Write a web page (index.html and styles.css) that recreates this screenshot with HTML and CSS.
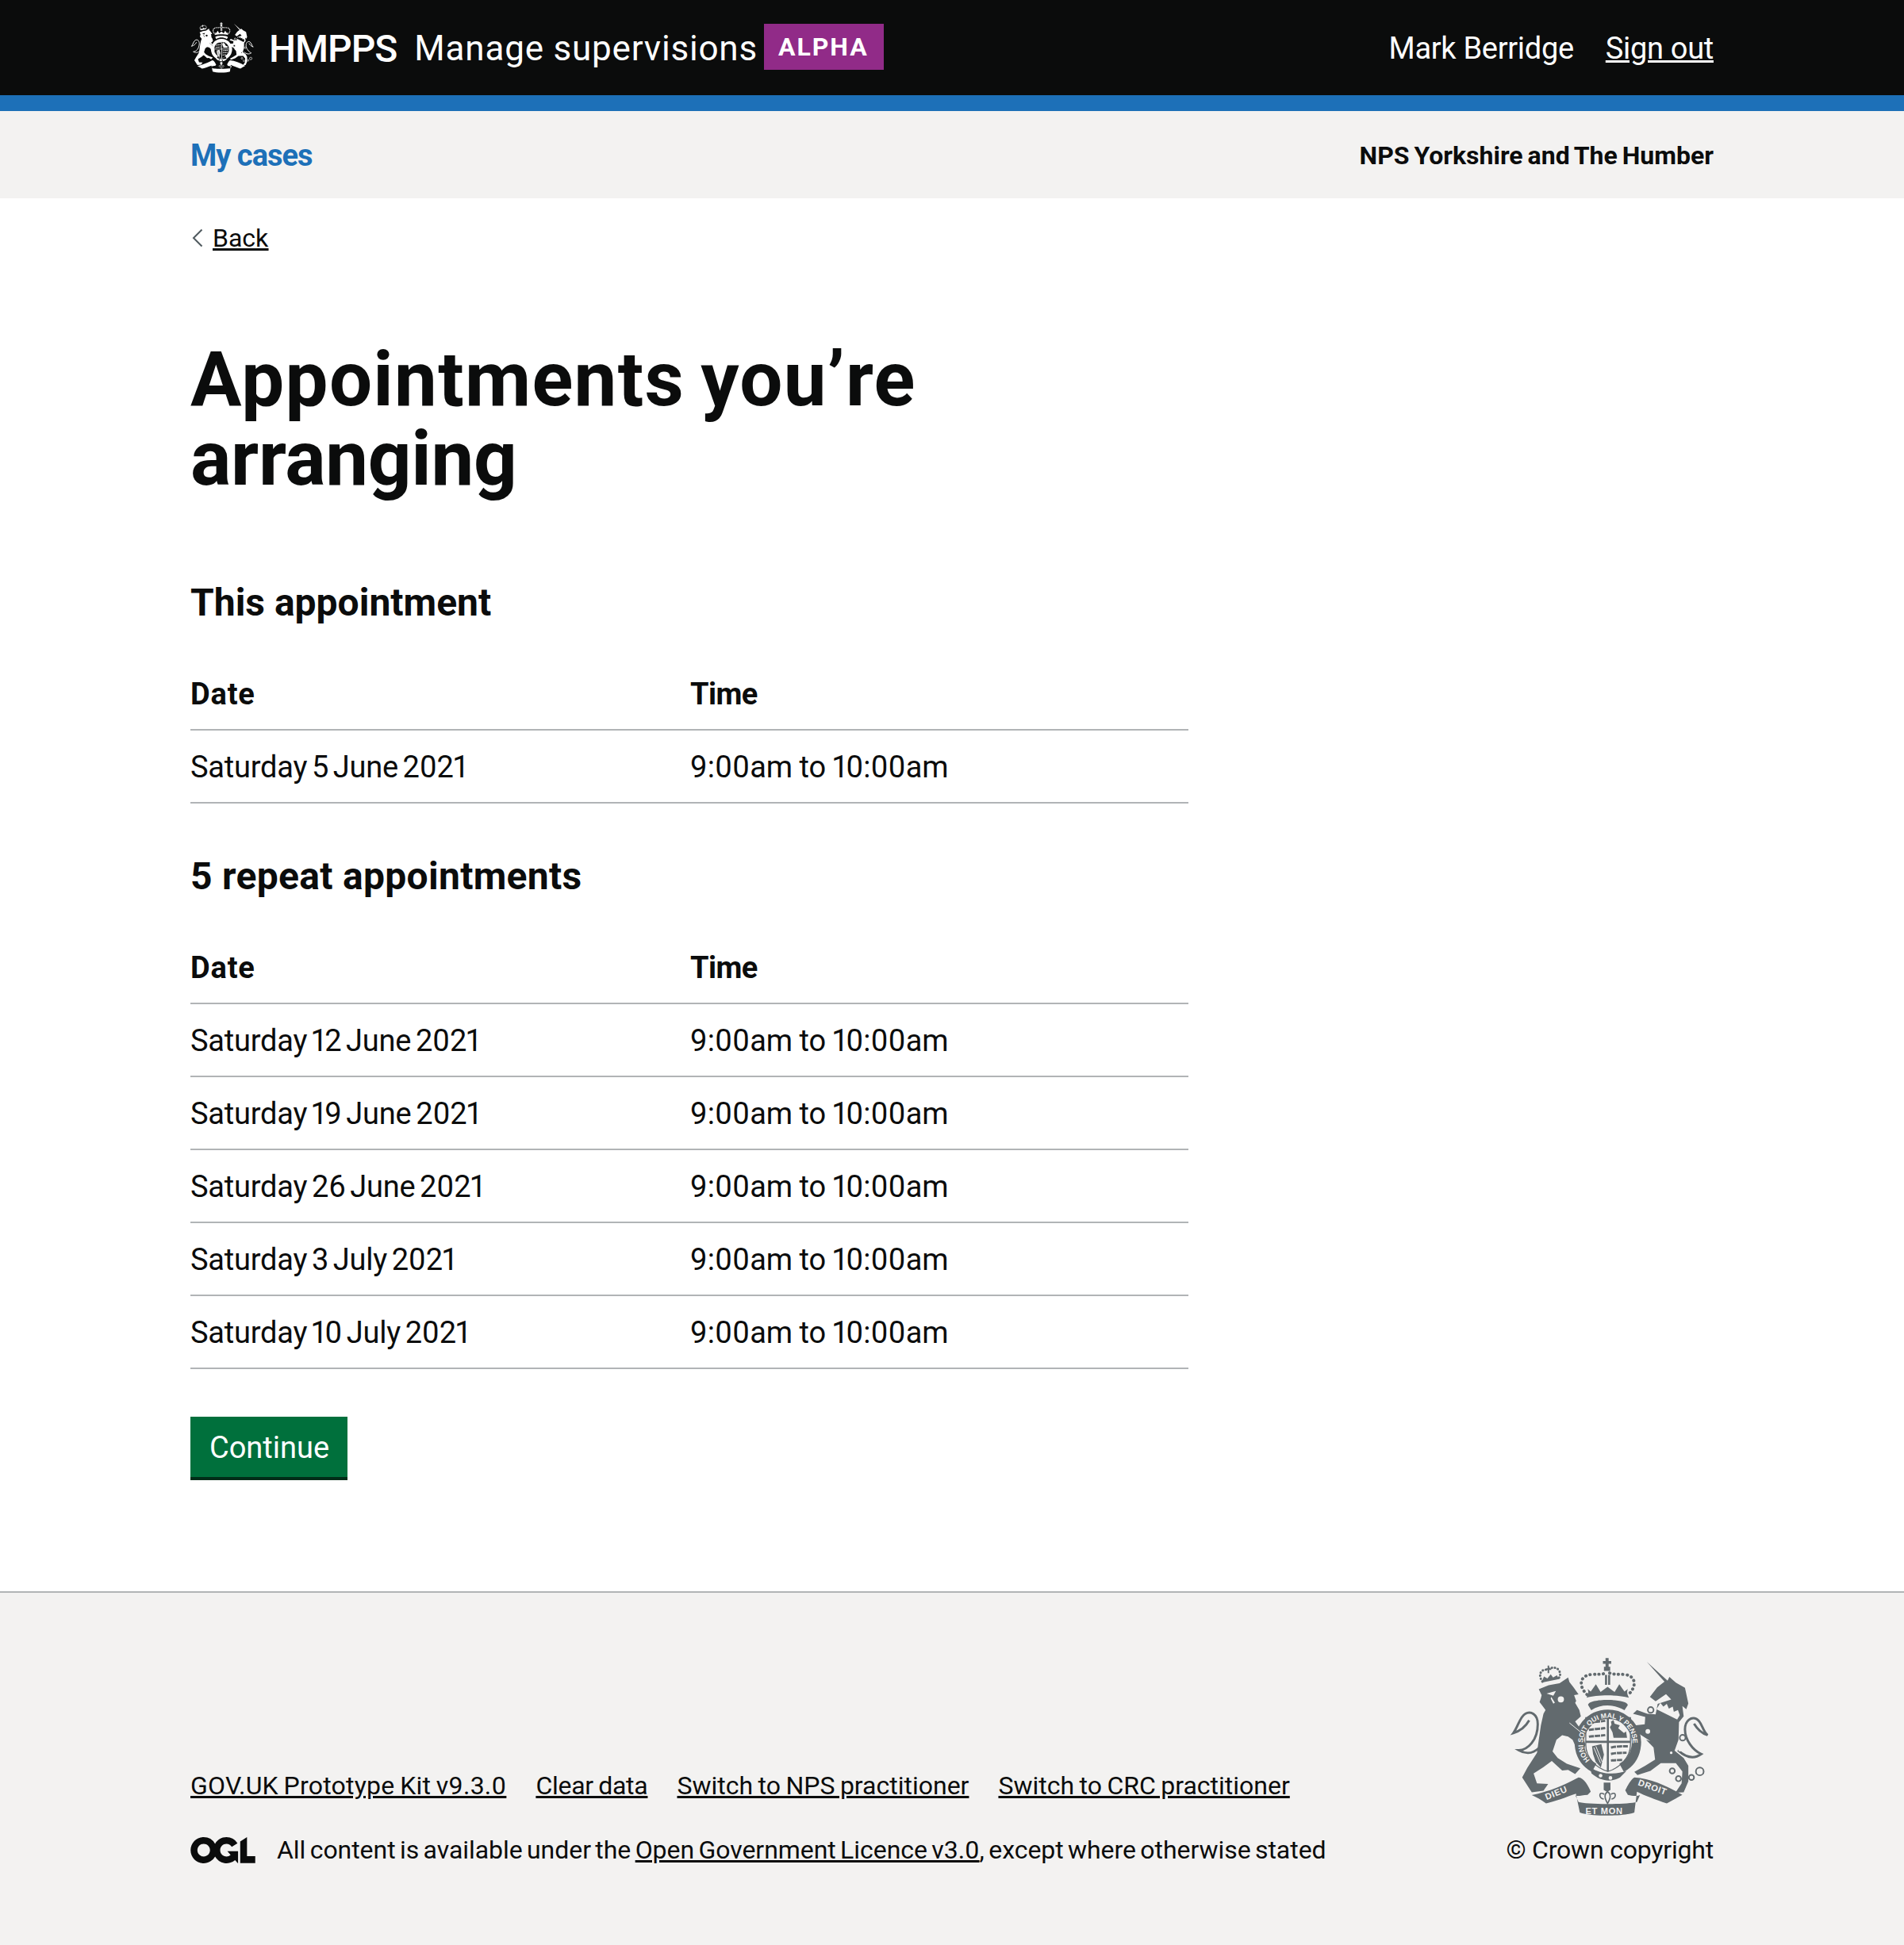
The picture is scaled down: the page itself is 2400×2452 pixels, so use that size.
FILE: index.html
```html
<!DOCTYPE html>
<html lang="en">
<head>
<meta charset="utf-8">
<title>Appointments you’re arranging</title>
<link rel="stylesheet" href="styles.css">
</head>
<body>
<svg class="defs" xmlns="http://www.w3.org/2000/svg" aria-hidden="true">
  <symbol id="crest" viewBox="120 80 770 620">
    <!-- main crown -->
    <path fill="currentColor" d="M489 85h12v12h10v10h-10v12h6v16h-24v-16h6v-12h-10v-10h10z"/>
    <path fill="currentColor" d="M487 150h8v38h-8zM499 150h8v38h-8z"/>
    <path fill="none" stroke="currentColor" stroke-width="12" stroke-dasharray="1 16" stroke-linecap="round" d="M418 226C385 195 388 155 430 149C455 146 475 150 490 143M505 143C520 150 540 146 565 149C607 155 610 195 577 226"/>
    <path fill="currentColor" d="M416 238C424 222 424 214 420 204L432 214L452 186L470 216L497 196L524 216L542 186L562 214L575 204C571 214 571 222 579 238C540 226 455 226 416 238Z"/>
    <path fill="currentColor" d="M422 266C422 240 572 240 575 266L562 286C520 262 472 262 434 286Z"/>
    <!-- garter ring -->
    <path fill="none" stroke="currentColor" stroke-width="36" d="M445 508A110 110 0 1 1 551 508"/>
    <path fill="currentColor" d="M430 505C470 535 530 535 570 520L545 545C510 565 470 560 435 530Z"/>
    <circle cx="470" cy="538" r="7" class="crest-hole"/><circle cx="508" cy="547" r="7" class="crest-hole"/>
    <!-- shield -->
    <path fill="none" stroke="currentColor" stroke-width="4" d="M413 315H585V420C585 470 540 510 498 522C455 510 413 470 413 420Z"/>
    <path fill="currentColor" d="M494 312h8v210h-8zM413 404h172v8h-172z"/>
    <path fill="none" stroke="currentColor" stroke-width="9" stroke-dasharray="20 3" d="M425 335C445 330 470 330 488 327M425 362C445 358 470 358 488 355M425 388C445 385 470 385 488 382M510 430C530 425 555 425 575 425M510 455C530 450 550 450 570 450M510 480C525 478 540 478 555 478"/>
    <path fill="currentColor" d="M510 330l10 -6l4 14l20 6l-6 12l22 18l8 -6l4 24h-52l-4 -20l-10 -20l6 -10zM437 425l36 -8l10 40l-12 50l-20 -22l-10 -30z"/>
    <path fill="none" class="crest-line" stroke-width="3" d="M444 430l26 60M452 425l24 60"/>
    <!-- lion crown -->
    <path fill="none" stroke="currentColor" stroke-width="9" stroke-dasharray="1 11" stroke-linecap="round" d="M246 176C228 150 240 128 262 130C280 120 302 118 311 135C318 150 312 158 308 164"/>
    <path fill="currentColor" d="M242 180L252 156L265 164L278 148L287 160L302 152L310 166Z"/>
    <path fill="currentColor" d="M260 125h6v-11h6v11h8v6h-8v12h-6v-12h-8z"/>
    <!-- lion -->
    <path fill="currentColor" d="M232 205L270 190L312 182L345 160L350 178L366 198L385 225L368 228L376 250L372 258L388 285L394 310L372 330L388 352L400 382L412 418L405 440L378 434L362 400L345 388L322 382L300 400L285 445L305 470L340 492L392 510L372 532L345 516L322 518L282 482L250 505L212 530L225 568L268 570L250 596L205 602L168 545L188 508L225 450L232 400L240 345L250 300L258 285L245 268L235 255L240 240L243 228Z"/>
    <path class="crest-hole" d="M262 222L298 212L288 230ZM305 244a12 12 0 1 0 24 0a12 11 0 1 0 -24 0zM280 235l14 22l-6 4l-10 -20z"/>
    <path fill="none" class="crest-line" stroke-width="3" d="M350 335L395 372"/>
    <path fill="none" stroke="currentColor" stroke-width="9" d="M232 432C205 458 175 452 155 440C190 440 228 400 228 340C228 300 200 288 180 300C160 310 152 350 134 374C160 366 182 348 195 325"/>
    <!-- unicorn -->
    <path fill="currentColor" d="M648 100L728 172L735 158L760 180L795 200L808 260L800 282L785 270L790 310L772 332L770 400L755 442L790 470L808 500L808 560L790 602L758 604L782 568L785 522L760 490L702 490L662 520L612 536L600 524L642 500L680 476L674 430L645 400L662 405L610 372L600 345L640 340L642 312L595 300L610 285L650 300L682 302L690 262L742 245L722 224L682 252L660 235L688 198L716 176Z"/>
    <path class="crest-hole" d="M690 275L700 258L712 272L725 262L733 280L748 272L752 292L768 285L775 305L765 322L685 282Z"/>
    <path fill="none" stroke="currentColor" stroke-width="9" d="M768 440C800 470 830 475 858 455C825 440 795 400 795 360C795 325 820 310 840 320C860 330 862 365 882 382C858 375 842 358 830 338"/>
    <g fill="none" stroke="currentColor" stroke-width="6">
      <circle cx="663" cy="285" r="11" class="crest-ring-fill"/><circle cx="652" cy="368" r="12" class="crest-ring-fill"/><circle cx="786" cy="392" r="11" class="crest-ring-fill"/>
      <circle cx="746" cy="520" r="10"/><circle cx="770" cy="550" r="10"/><circle cx="820" cy="545" r="10"/><circle cx="852" cy="522" r="15"/>
    </g>
    <circle cx="776" cy="438" r="7" class="crest-hole"/><circle cx="742" cy="450" r="5" class="crest-hole"/>
    <!-- ribbon -->
    <path fill="currentColor" d="M205 613C270 600 330 575 385 545C405 545 425 580 432 600L420 612C395 612 380 622 372 612L385 640C415 650 570 650 610 640L622 612C610 620 590 615 575 612L565 595C575 575 585 555 600 545C660 548 720 575 785 612C760 625 745 635 725 645C680 630 640 615 610 600L600 680C560 696 430 696 390 680L375 608C340 620 290 640 260 645C240 630 225 622 205 613Z"/>
    <!-- fleur -->
    <path fill="none" stroke="currentColor" stroke-width="5" d="M497 600C515 612 505 632 497 645C489 632 479 612 497 600ZM484 610C462 595 462 628 482 628M510 610C532 595 532 628 512 628"/>
    <path fill="currentColor" d="M482 565h26v28l-13 8l-13 -8z"/>
  </symbol>
</svg>

<header class="site-header">
  <div class="wrap header-row">
    <a class="brand" href="#">
      <svg class="crest-small"><use href="#crest"/></svg>
      <span class="brand-org">HMPPS</span>
      <span class="brand-service">Manage supervisions</span>
      <strong class="phase-tag">ALPHA</strong>
    </a>
    <div class="account">
      <span class="account-name">Mark Berridge</span>
      <a class="account-link" href="#">Sign out</a>
    </div>
  </div>
</header>

<nav class="subnav">
  <div class="wrap subnav-row">
    <a class="subnav-link" href="#">My cases</a>
    <span class="subnav-team">NPS Yorkshire and The Humber</span>
  </div>
</nav>

<main class="wrap main">
  <a class="back-link" href="#"><svg class="back-icon" viewBox="0 0 14 24"><path d="M12.5 1.500L2 12l10.500 10.500" fill="none" stroke="currentColor" stroke-width="2"/></svg><span class="back-text">Back</span></a>
  <h1 class="page-title">Appointments you’re<br><span class="page-title-tight">arranging</span></h1>

  <h2 class="section-title">This appointment</h2>
  <table class="appt-table">
    <thead><tr><th>Date</th><th>Time</th></tr></thead>
    <tbody>
      <tr><td>Saturday 5 June 2021</td><td>9:00am to 10:00am</td></tr>
    </tbody>
  </table>

  <h2 class="section-title section-next">5 repeat appointments</h2>
  <table class="appt-table">
    <thead><tr><th>Date</th><th>Time</th></tr></thead>
    <tbody>
      <tr><td>Saturday 12 June 2021</td><td>9:00am to 10:00am</td></tr>
      <tr><td>Saturday 19 June 2021</td><td>9:00am to 10:00am</td></tr>
      <tr><td>Saturday 26 June 2021</td><td>9:00am to 10:00am</td></tr>
      <tr><td>Saturday 3 July 2021</td><td>9:00am to 10:00am</td></tr>
      <tr><td>Saturday 10 July 2021</td><td>9:00am to 10:00am</td></tr>
    </tbody>
  </table>

  <button class="continue" type="button">Continue</button>
</main>

<footer class="site-footer">
  <div class="wrap footer-row">
    <div class="footer-meta">
      <ul class="footer-links">
        <li><a href="#">GOV.UK Prototype Kit v9.3.0</a></li>
        <li><a href="#">Clear data</a></li>
        <li><a href="#">Switch to NPS practitioner</a></li>
        <li><a href="#">Switch to CRC practitioner</a></li>
      </ul>
      <div class="licence">
        <svg class="ogl" viewBox="0 0 483.2 195.7"><path fill="currentColor" d="M421.5 142.8V.1l-50.7 32.300v161.100h112.400v-50.700zm-122.300-9.600A47.120 47.120 0 0 1 221 97.800c0-26 21.100-47.100 47.100-47.100 16.700 0 31.400 8.700 39.700 21.800l42.700-27.200A97.630 97.630 0 0 0 268.100 0c-36.500 0-68.300 20.100-85.100 49.700A98 98 0 0 0 97.800 0C43.900 0 0 43.900 0 97.800s43.900 97.800 97.800 97.800c36.500 0 68.300-20.100 85.100-49.700a97.760 97.760 0 0 0 149.600 25.400l19.400 22.200h3v-87.800h-80l24.300 27.500zM97.800 145c-26 0-47.100-21.100-47.100-47.100s21.100-47.100 47.100-47.100 47.200 21 47.200 47S123.800 145 97.800 145"/></svg>
        <span>All content is available under the <a href="#">Open Government Licence v3.0</a>, except where otherwise stated</span>
      </div>
    </div>
    <div class="footer-crown">
      <svg class="crest-large" viewBox="120 80 770 620">
        <use href="#crest" x="120" y="80" width="770" height="620"/>
        <path id="ring-text" fill="none" d="M436 485A96 96 0 1 1 560 485"/>
        <text class="crest-text crest-ring"><textPath href="#ring-text" startOffset="2%">HONI SOIT QUI MAL Y PENSE</textPath></text>
        <text class="crest-text crest-motto" x="262" y="632" transform="rotate(-22 262 632)">DIEU</text>
        <text class="crest-text crest-motto" x="412" y="686">ET MON</text>
        <text class="crest-text crest-motto" x="612" y="574" transform="rotate(20 612 574)">DROIT</text>
      </svg>
      <a class="copyright" href="#">© Crown copyright</a>
    </div>
  </div>
</footer>
</body>
</html>
```

FILE: styles.css
```css
* { box-sizing: border-box; }
html, body { margin: 0; padding: 0; }
body {
  font-family: Roboto, "Noto Sans", sans-serif;
  font-variant-numeric: proportional-nums;
  color: #0b0c0c;
  background: #fff;
}
a { color: inherit; }
.defs { display: none; }
.wrap { width: 1920px; margin: 0 auto; }

.crest-hole { fill: var(--crest-bg); }
.crest-ring-fill { fill: var(--crest-bg); }
.crest-line { stroke: var(--crest-bg); }
.crest-text { fill: var(--crest-bg); font-family: "Liberation Sans", Arial, sans-serif; font-weight: 700; }
.crest-ring { font-size: 27px; }
.crest-motto { font-size: 34px; letter-spacing: 2px; }

/* Header */
.site-header {
  background: #0b0c0c;
  border-bottom: 20px solid #1d70b8;
  color: #fff;
  --crest-bg: #0b0c0c;
}
.header-row { height: 120px; padding-top: 2px; display: flex; align-items: center; justify-content: space-between; }
.brand { display: flex; align-items: center; text-decoration: none; color: #fff; }
.crest-small { width: 80px; height: 68px; margin: -2px 19px 0 0; }
.brand-org { font-size: 48px; font-weight: 500; letter-spacing: -1px; margin-right: 22px; }
.brand-service { font-size: 44px; font-weight: 400; letter-spacing: .8px; margin-right: 8px; }
.phase-tag {
  background: #912b88;
  font-size: 32px;
  font-weight: 700;
  letter-spacing: 2px;
  line-height: 58px;
  height: 58px;
  margin-top: -4px;
  padding: 0 19px 0 18px;
}
.account { display: flex; align-items: center; gap: 40px; font-size: 38px; letter-spacing: -.3px; }
.account-link { color: #fff; }

/* Sub navigation */
.subnav { background: #f3f2f1; }
.subnav-row { height: 110px; padding-top: 2px; display: flex; align-items: center; justify-content: space-between; }
.subnav-link { color: #1d70b8; font-size: 38px; font-weight: 700; letter-spacing: -1px; text-decoration: none; }
.subnav-team { font-size: 32px; font-weight: 700; word-spacing: -2px; }

/* Main */
.main { display: block; padding-bottom: 140px; }
.back-link { display: inline-flex; align-items: center; margin-top: 30px; height: 40px; font-size: 32px; line-height: 40px; }
.back-icon { width: 14px; height: 24px; margin: 0 12px 0 2px; color: #505a5f; }
.back-text { text-decoration: underline; }
.page-title { margin: 108px 0 100px; height: 200px; font-size: 96px; line-height: 100px; font-weight: 700; letter-spacing: 1.3px; word-spacing: -5px; }
.page-title-tight { letter-spacing: -.3px; }
.section-title { margin: 0 0 40px; padding-top: 2px; height: 60px; font-size: 48px; line-height: 60px; font-weight: 700; letter-spacing: 0; }
.section-next { margin-top: 60px; letter-spacing: .3px; }
.appt-table { width: 1258px; table-layout: fixed; border-collapse: collapse; font-size: 38px; line-height: 50px; }
.appt-table th, .appt-table td {
  padding: 21px 40px 19px 0;
  height: 92px;
  text-align: left;
  border-bottom: 2px solid #b1b4b6;
}
.appt-table th:first-child { width: 630px; }
.appt-table td:first-child { word-spacing: -3.5px; letter-spacing: -.22px; }
.appt-table td:last-child { word-spacing: -1px; }
.appt-table th { font-weight: 700; }
.appt-table th:first-child { letter-spacing: .8px; }
.appt-table th:last-child { letter-spacing: -.6px; }
.continue {
  display: block;
  margin: 60px 0 0;
  width: 198px;
  height: 80px;
  padding: 1px 0 4px 1px;
  border: 0;
  background: #00703c;
  box-shadow: inset 0 -4px 0 #002d18;
  color: #fff;
  font: 400 38px Roboto, "Noto Sans", sans-serif;
}

/* Footer */
.site-footer {
  background: #f3f2f1;
  border-top: 2px solid #b1b4b6;
  padding: 80px 0 100px;
  --crest-bg: #f3f2f1;
}
.footer-row { display: flex; align-items: flex-end; justify-content: space-between; }
.footer-meta { font-size: 32px; line-height: 40px; }
.footer-links { list-style: none; margin: 0 0 41px; padding: 1px 0 0; display: flex; gap: 37px; word-spacing: -1.5px; }
.footer-links li:first-child { letter-spacing: .22px; }
.footer-links li:nth-child(2) { letter-spacing: -.25px; }
.licence { display: flex; align-items: center; gap: 27px; word-spacing: -2.5px; letter-spacing: -.05px; }
.ogl { width: 82px; height: 33px; }
.footer-crown { display: flex; flex-direction: column; align-items: center; font-size: 32px; line-height: 40px; letter-spacing: -.2px; }
.crest-large { width: 252px; height: 204px; margin-bottom: 20px; color: #626a6e; }
.copyright { text-decoration: none; }
```
